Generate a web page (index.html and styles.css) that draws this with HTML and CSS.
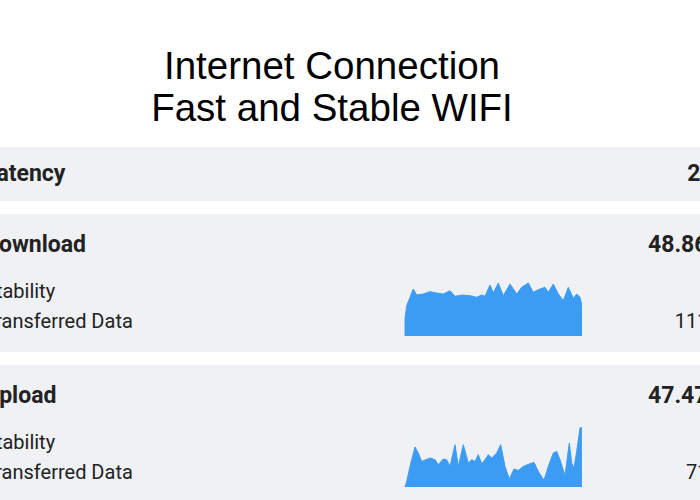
FILE: index.html
```html
<!DOCTYPE html>
<html lang="en">
<head>
  <meta charset="UTF-8" />
  <title>Internet Connection</title>
  <link rel="stylesheet" href="styles.css">
</head>
<body>

  <div class="page">
    <h1 class="title">Internet Connection<br>Fast and Stable WIFI</h1>

    <!-- Latency -->
    <div class="card card-small">
      <div class="card-head">
        <span class="card-title">Latency</span>
        <span class="card-value">24.3 ms</span>
      </div>
    </div>

    <!-- Download -->
    <div class="card">
      <div class="card-head">
        <span class="card-title">Download</span>
        <span class="card-value">48.86 Mbps</span>
      </div>
      <div class="card-body">
        <div class="labels">
          <div>Stability</div>
          <div>Transferred Data</div>
        </div>
        <svg class="chart" width="178" height="60" viewBox="0 0 178 60">
          <path d="M1 60 L1 43 L2.7 29.7 L9.3 13 L12.7 19 L19.3 18 L26 15.7 L32.7 17 L39.3 18 L46 14.7 L51 20.3 L57.7 19 L66 19.7 L72.7 21.3 L77.7 19 L81 20.3 L86 9 L89.3 17 L94.3 7 L99.3 19.7 L106 8 L112.7 18 L117.7 11.3 L124.3 7 L129.3 16.3 L134.3 13.7 L141 11.3 L144.3 16.3 L149.3 8 L154.3 18 L159.3 24.7 L164.3 11.3 L169.3 22.3 L172.7 18 L176 21.3 L178 29.7 L178 60 Z"/>
        </svg>
        <div class="values">
          <div>98 %</div>
          <div>111.25 MB</div>
        </div>
      </div>
    </div>

    <!-- Upload -->
    <div class="card">
      <div class="card-head">
        <span class="card-title">Upload</span>
        <span class="card-value">47.47 Mbps</span>
      </div>
      <div class="card-body">
        <div class="labels">
          <div>Stability</div>
          <div>Transferred Data</div>
        </div>
        <svg class="chart" width="178" height="60" viewBox="0 0 178 60">
          <path d="M1 60 L2.7 54.4 L6 39.4 L11 20 L14.3 26 L17.7 34.4 L26 31 L31 32.7 L34.3 37.7 L39.3 32 L42.7 32.7 L46 39.4 L51 17.7 L54.3 39.4 L59.3 17.7 L64.3 36 L67.7 32.7 L71 34.4 L74.3 27.7 L77.7 36.7 L81 32.7 L84.3 27.7 L87.7 31 L92.7 26 L96.7 17.7 L101 39.4 L105.3 52 L110 42 L114.3 43.4 L119.3 39.4 L126 36.7 L130 35.4 L134.3 44.4 L140 53.4 L144.3 39.4 L149.3 26 L152.7 24.4 L156 32.7 L161 48.7 L165.3 16 L167.7 36 L170 41 L172.7 24.4 L176 1 L177.7 0.5 L178 60 Z"/>
        </svg>
        <div class="values">
          <div>96 %</div>
          <div>71.25 MB</div>
        </div>
      </div>
    </div>
  </div>

</body>
</html>
```

FILE: styles.css
```css
html, body {
  overflow: hidden;
}

body {
  margin: 0;
  padding: 0;
  background-color: #fff;
  font-family: "Segoe UI", Roboto, "Liberation Sans", sans-serif;
  color: #222;
}

.page {
  width: 819px;
  margin-left: -32px;
}

.title {
  width: 728px;
  margin: 45px 0 18px 0;
  font-family: "Liberation Sans", Arial, sans-serif;
  font-size: 38.5px;
  line-height: 42px;
  font-weight: normal;
  text-align: center;
  color: #000;
}

.card {
  background-color: #f0f1f5;
  padding: 16px 16px;
  margin-bottom: 13px;
}

.card-small {
  padding: 12px 16px;
}

.card-head {
  display: flex;
  justify-content: space-between;
  line-height: 30px;
}

.card-title,
.card-value {
  font-size: 23px;
  font-weight: bold;
}

.card-body {
  display: flex;
  margin-top: 16px;
  font-size: 20px;
  line-height: 30px;
}

.labels {
  width: 420px;
}

.chart {
  display: block;
  fill: #3c9cf4;
  stroke: #3c9cf4;
  stroke-width: 1;
  stroke-linejoin: round;
}

.values {
  flex: 1;
  text-align: right;
}
```
